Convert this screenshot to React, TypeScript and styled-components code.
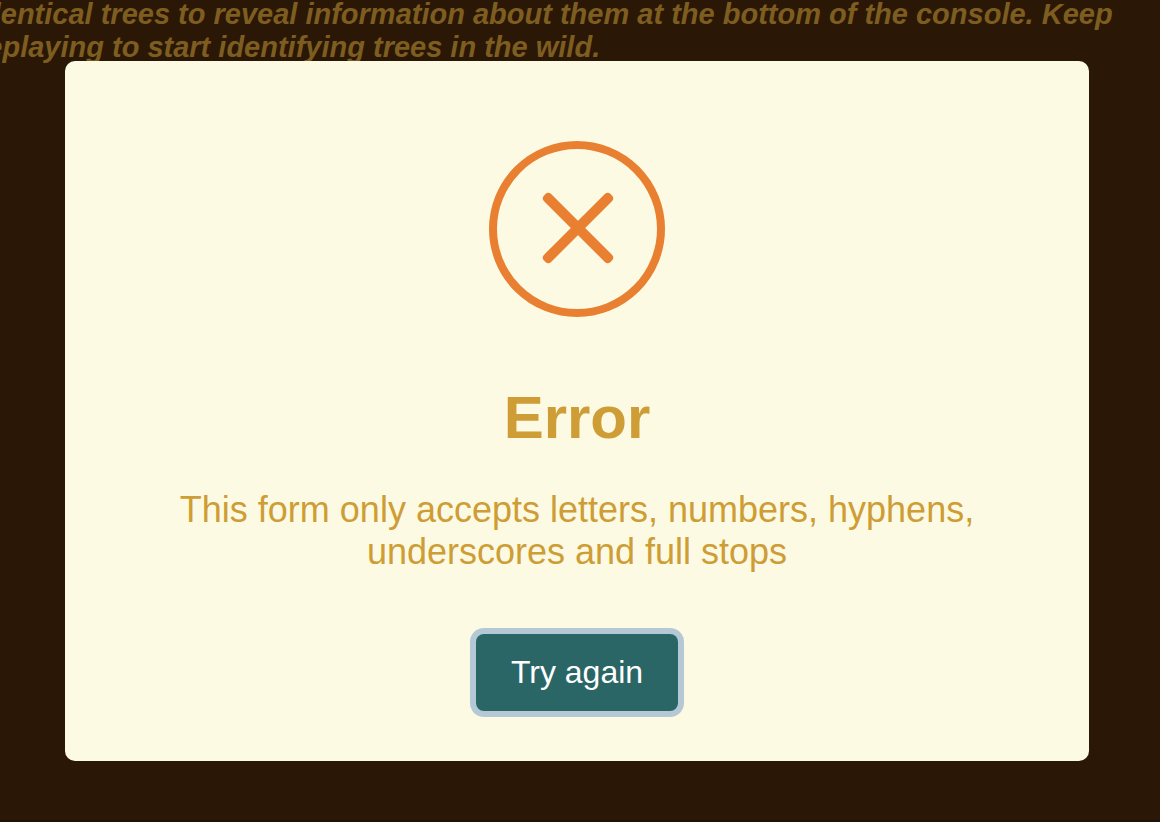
import React from "react";
import styled, { createGlobalStyle } from "styled-components";

const GlobalStyle = createGlobalStyle`
  *, *::before, *::after { box-sizing: border-box; }
  body {
    margin: 0;
    background: #2b1705;
    font-family: "Liberation Sans", Arial, Helvetica, sans-serif;
  }
`;

const Page = styled.main`
  position: relative;
  min-height: 100vh;
  overflow: hidden;
  background: #2b1705;
  border-bottom: 2px solid #201104;
`;

const Intro = styled.p`
  margin: -2px 0 0 -25px;
  color: #7d5d20;
  font-size: 29px;
  font-style: italic;
  font-weight: 700;
  line-height: 33px;
  white-space: nowrap;
`;

const Overlay = styled.div`
  position: absolute;
  inset: 0;
  display: flex;
  align-items: center;
  padding: 2px 71px 0 65px;
`;

const Dialog = styled.section`
  flex: 1;
  display: flex;
  flex-direction: column;
  align-items: center;
  padding: 80px 80px 50px;
  border-radius: 10px;
  background: #fcfae3;
  color: #ce9d35;
  text-align: center;
`;

const ErrorIcon = styled.svg`
  display: block;
  width: 176px;
  height: 176px;
`;

const Title = styled.h2`
  margin: 66px 0 0;
  font-size: 60px;
  line-height: 70px;
`;

const Message = styled.p`
  margin: 36px 0 0;
  font-size: 36px;
  line-height: 42px;
`;

const ConfirmButton = styled.button`
  margin-top: 61px;
  padding: 20px 35px;
  border: 0;
  border-radius: 8px;
  background: #2a6665;
  box-shadow: 0 0 0 6px #b5c8d5;
  color: #fff;
  font-family: inherit;
  font-size: 32px;
  line-height: 37px;
  cursor: pointer;
  outline: none;
`;

export default function App() {
  return (
    <>
      <GlobalStyle />
      <Page>
        <Intro>
          identical trees to reveal information about them at the bottom of the console. Keep
          <br />
          replaying to start identifying trees in the wild.
        </Intro>
        <Overlay>
          <Dialog role="alertdialog" aria-modal="true" aria-labelledby="title" aria-describedby="message">
            <ErrorIcon viewBox="0 0 176 176" aria-hidden="true">
              <circle cx="88" cy="88" r="84" fill="none" stroke="#e97f30" strokeWidth="8" />
              <g fill="#e97f30">
                <rect x="42" y="82" width="94" height="10" rx="4" transform="rotate(45 89 87)" />
                <rect x="42" y="82" width="94" height="10" rx="4" transform="rotate(-45 89 87)" />
              </g>
            </ErrorIcon>
            <Title id="title">Error</Title>
            <Message id="message">This form only accepts letters, numbers, hyphens, underscores and full stops</Message>
            <ConfirmButton type="button">Try again</ConfirmButton>
          </Dialog>
        </Overlay>
      </Page>
    </>
  );
}
